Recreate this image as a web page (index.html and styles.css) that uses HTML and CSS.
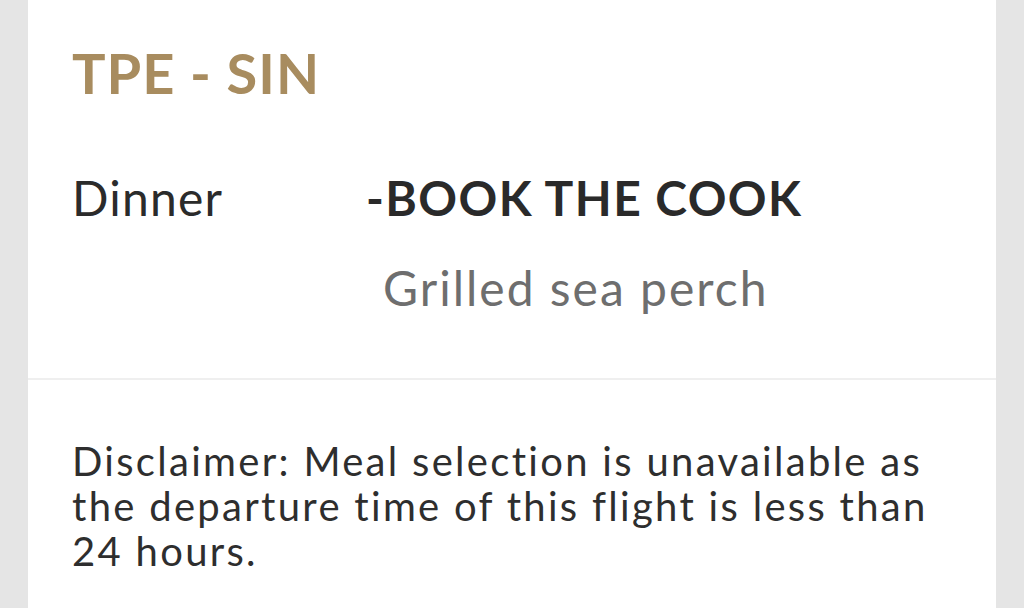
FILE: index.html
```html
<!DOCTYPE html>
<html lang="en">
<head>
<meta charset="utf-8">
<title>Meal selection</title>
<link rel="stylesheet" href="styles.css">
</head>
<body>
<div class="card">
  <section class="flight">
    <h2 class="route">TPE - SIN</h2>
    <div class="meal-row">
      <div class="meal-type">Dinner</div>
      <div class="meal-info">
        <div class="meal-name">-BOOK THE COOK</div>
        <div class="meal-desc">Grilled sea perch</div>
      </div>
    </div>
  </section>
  <section class="disclaimer">
    <p>Disclaimer: Meal selection is unavailable as the departure time of this flight is less than 24 hours.</p>
  </section>
</div>
</body>
</html>
```
FILE: styles.css
```css
html, body {
  margin: 0;
  padding: 0;
  height: 100%;
  overflow: hidden;
}
body {
  background: #e5e5e5;
  font-family: Lato, "Open Sans", sans-serif;
  font-variant-ligatures: none;
}
.card {
  margin-left: 28px;
  width: 968px;
  height: 100%;
  background: #ffffff;
}
.flight {
  padding: 45px 44px 66px 44px;
  border-bottom: 2px solid #efefef;
}
.route {
  margin: 0;
  font-size: 56px;
  line-height: 56px;
  font-weight: 700;
  letter-spacing: 1px;
  color: #a88c5f;
}
.meal-row {
  display: flex;
  margin-top: 72px;
}
.meal-type {
  width: 294px;
  font-size: 48px;
  line-height: 49px;
  letter-spacing: 1.2px;
  color: #2b2b2b;
}
.meal-info {
  display: flex;
  flex-direction: column;
  gap: 42px;
}
.meal-name {
  font-size: 48px;
  line-height: 49px;
  font-weight: 700;
  letter-spacing: 1.4px;
  color: #2a2a2a;
}
.meal-desc {
  margin-left: 17px;
  font-size: 48px;
  line-height: 48px;
  letter-spacing: 2px;
  color: #6e6e6e;
}
.disclaimer {
  padding: 59px 44px 0 44px;
}
.disclaimer p {
  margin: 0;
  font-size: 40px;
  line-height: 45px;
  letter-spacing: 2.3px;
  color: #2e2e2e;
}
```
